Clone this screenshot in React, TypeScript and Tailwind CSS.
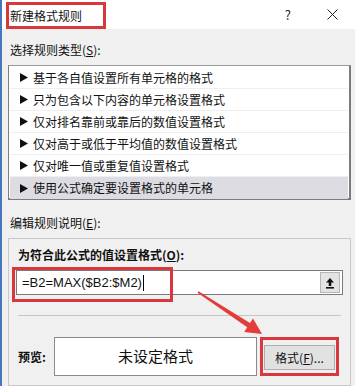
const font = "font-['Microsoft_YaHei','Noto_Sans_CJK_SC',sans-serif]"

const rules = [
  '基于各自值设置所有单元格的格式',
  '只为包含以下内容的单元格设置格式',
  '仅对排名靠前或靠后的数值设置格式',
  '仅对高于或低于平均值的数值设置格式',
  '仅对唯一值或重复值设置格式',
  '使用公式确定要设置格式的单元格',
]

function Tri() {
  return (
    <svg width="8" height="9" viewBox="0 0 8 9" className="shrink-0">
      <polygon points="0,0 8,4.5 0,9" fill="#111" />
    </svg>
  )
}

function RuleRow({text, selected}: {text: string; selected?: boolean}) {
  return (
    <div
      className={`flex h-[22px] items-center gap-[5px] pl-[10px] ${
        selected ? 'bg-[#dcdce2]' : 'border-b border-[#efefef]'
      }`}
    >
      <Tri />
      <span className="text-[12px] leading-none text-[#111]">{text}</span>
    </div>
  )
}

export default function App() {
  return (
    <div className={`relative flex h-[386px] w-[355px] overflow-hidden bg-[#f0f0f0] ${font}`}>
      <div className="w-[2px] shrink-0 bg-[#4677bd]" />
      <div className="flex min-w-0 flex-1 flex-col">
        {/* title bar */}
        <div className="flex h-[29px] items-center bg-white">
          <div className="ml-[4px] mt-[2px] flex h-[27px] w-[100px] items-center border-[3px] border-[#d8383d] pl-[1px] text-[12px] text-[#111]">
            新建格式规则
          </div>
          <span className="ml-auto text-[13px] text-[#222]">?</span>
          <svg width="11" height="11" viewBox="0 0 11 11" className="ml-[36px] mr-[17px]">
            <path d="M0.5 0.5 L10.5 10.5 M10.5 0.5 L0.5 10.5" stroke="#222" strokeWidth="1" />
          </svg>
        </div>

        <div className="flex flex-1 flex-col pl-[6px] pr-[4px]">
          <div className="mt-[13px] h-[16px] pl-[2px] text-[12px] leading-[16px] text-[#111]">
            选择规则类型(<span className="underline">S</span>):
          </div>

          {/* rule list */}
          <div className="mt-[7px] h-[135px] border border-b-2 border-r-2 border-[#7c7c7c] border-t-[#9a9a9a] bg-white pt-[1px]">
            <div className="mx-[1px]">
              {rules.map((r, i) => (
                <RuleRow key={r} text={r} selected={i === rules.length - 1} />
              ))}
            </div>
          </div>

          <div className="mt-[15px] h-[16px] pl-[2px] text-[12px] leading-[16px] text-[#111]">
            编辑规则说明(<span className="underline">E</span>):
          </div>

          {/* description group */}
          <div className="mt-[7px] flex flex-1 flex-col border border-[#c9c9c9] px-[7px]">
            <div className="mt-[8px] h-[16px] pl-[2px] text-[12px] font-bold leading-[16px] text-[#111]">
              为符合此公式的值设置格式(<span className="underline">O</span>):
            </div>
            <div className="mt-[7px] flex h-[25px] items-center border border-[#7a7a7a] bg-white pl-[5px] pr-[2px]">
              <span className="font-['Liberation_Sans',sans-serif] text-[13px] text-[#111]">=B2=MAX($B2:$M2)</span>
              <span className="ml-[1px] h-[16px] w-px bg-black" />
              <div className="ml-auto flex h-[21px] w-[20px] items-center justify-center border border-[#b5b5b5] bg-[#e3e3e3]">
                <svg width="10" height="12" viewBox="0 0 10 12">
                  <path d="M5 1 L9 5.5 H6.3 V9 H3.7 V5.5 H1 Z" fill="#111" />
                  <rect x="1" y="10" width="8" height="1.6" fill="#111" />
                </svg>
              </div>
            </div>

            <div className="mx-[2px] mt-[20px] h-px bg-[#c6c6c6]" />

            <div className="mt-[21px] flex items-center">
              <span className="w-[38px] pl-[2px] text-[12px] font-bold text-[#111]">预览:</span>
              <div className="flex h-[39px] w-[203px] items-center justify-center border border-[#8a8a8a] bg-white text-[15px] text-[#111]">
                未设定格式
              </div>
              <div className="ml-[3px] border-[3px] border-[#d8383d] px-[1px] pb-[3px] pt-[5px]">
                <div className="flex h-[25px] w-[71px] items-center justify-center border border-[#adadad] bg-[#e1e1e1] text-[12px] text-[#111]">
                  格式(<span className="underline">F</span>)...
                </div>
              </div>
            </div>
          </div>
        </div>
      </div>

      {/* highlight around formula */}
      <div className="pointer-events-none absolute left-[12px] top-[267px] h-[35px] w-[161px] border-[3px] border-[#d8383d]" />

      {/* red arrow */}
      <svg className="pointer-events-none absolute left-0 top-0" width="355" height="386">
        <polygon
          points="198.5,291.2 250,323.1 253,318.5 262,334 244.2,331.9 247.2,327.3 197.5,292.8"
          fill="#e43b3b"
        />
      </svg>
    </div>
  )
}
